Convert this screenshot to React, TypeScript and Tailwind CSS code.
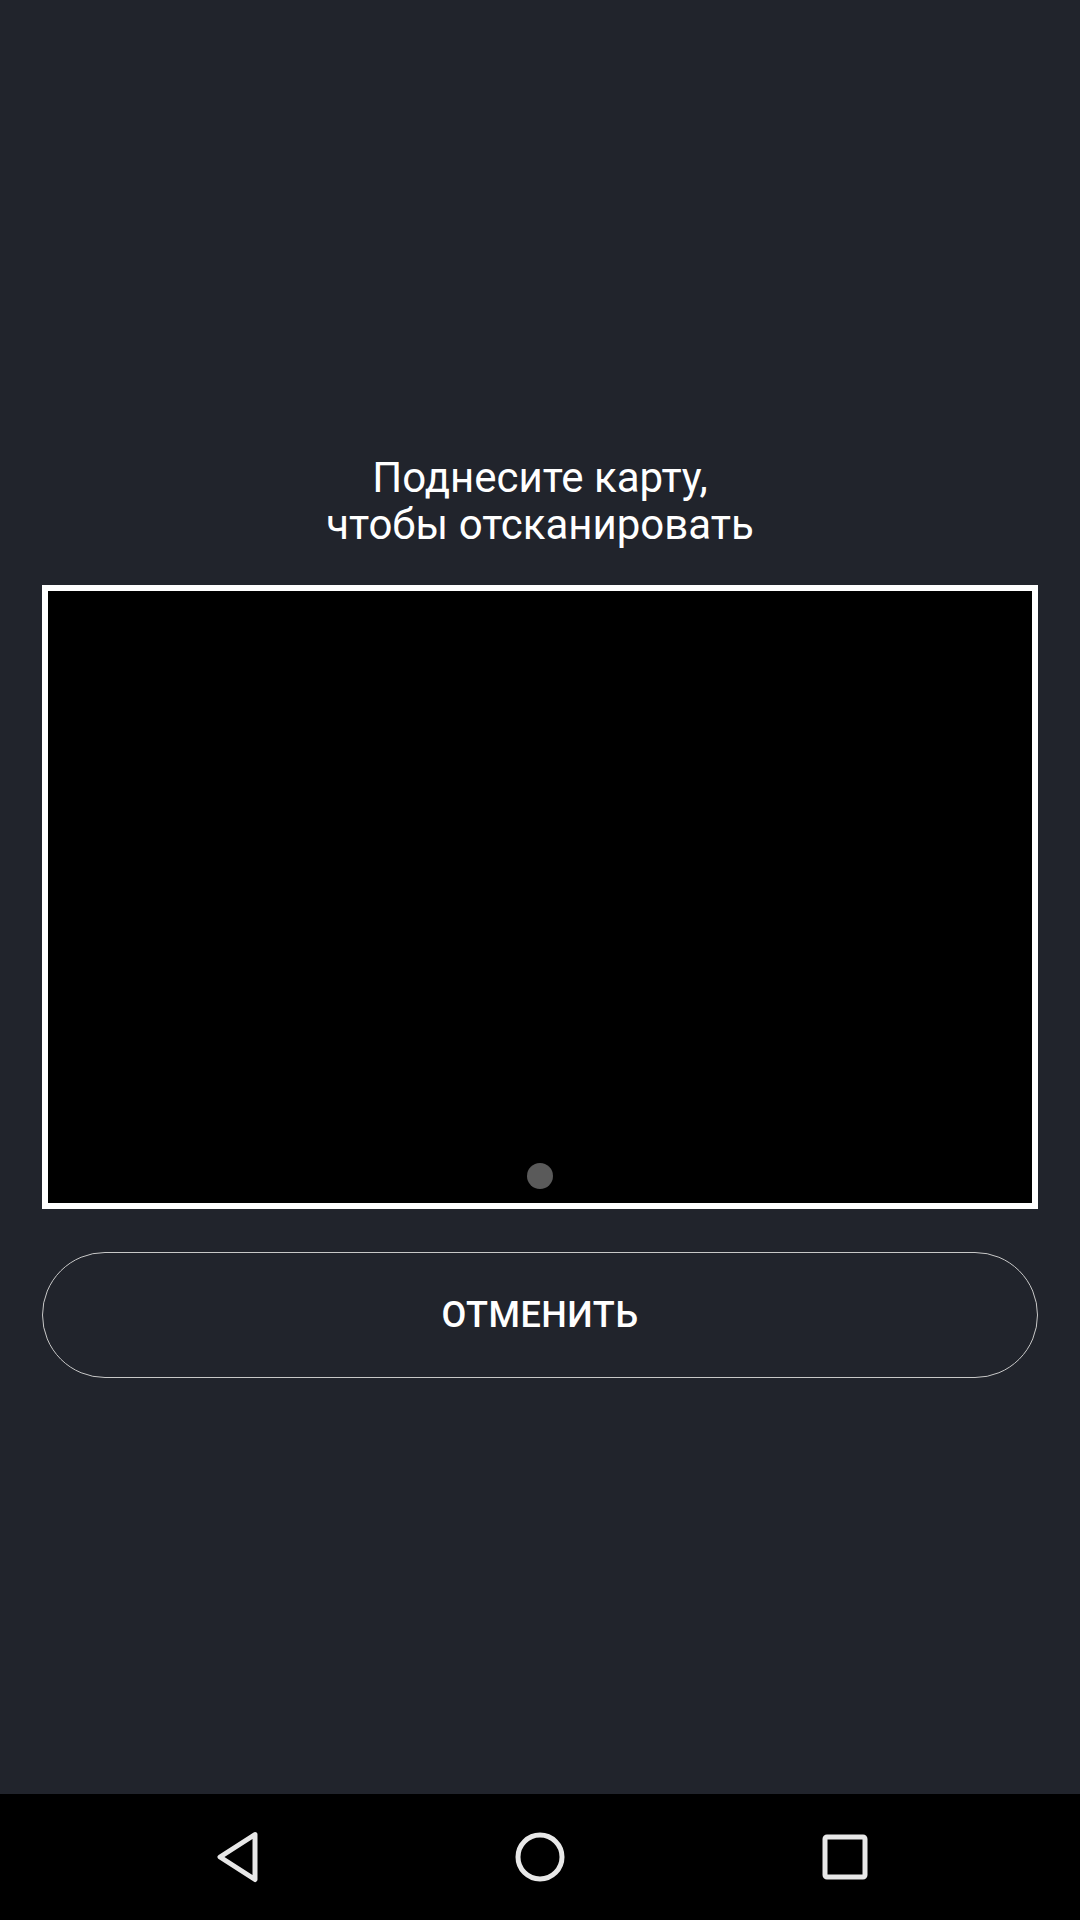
export default function App() {
  return (
    <div
      className="flex h-[1920px] w-[1080px] flex-col bg-[#21242c] text-white"
      style={{ fontFamily: "Roboto, 'Noto Sans', sans-serif" }}
    >
      <main className="flex flex-1 flex-col items-center px-[42px] pt-[454px]">
        <h1 className="text-center text-[42px] font-normal leading-[47px] text-white">
          Поднесите карту,
          <br />
          чтобы отсканировать
        </h1>

        <div className="relative mt-[37px] h-[624px] w-full border-[6px] border-white bg-black">
          {/* camera focus dot */}
          <span className="absolute bottom-[14px] left-1/2 h-[26px] w-[26px] -translate-x-1/2 rounded-full bg-[#5a5a5a]" />
        </div>

        <button
          type="button"
          className="mt-[43px] flex h-[126px] w-full items-center justify-center rounded-full border border-[#c8c8c8] text-[36px] font-medium tracking-[0.5px] text-white"
        >
          ОТМЕНИТЬ
        </button>
      </main>

      <nav className="flex h-[126px] items-center bg-black pl-[178px]">
        <div className="flex w-[120px] justify-center">
          <svg viewBox="0 0 44 52" className="h-[52px] w-[44px]" fill="none" stroke="#e8e8e8" strokeWidth="5" strokeLinejoin="round">
            <path d="M39 3.5 L4 26 L39 48.5 Z" />
          </svg>
        </div>
        <div className="ml-[182px] flex w-[120px] justify-center">
          <svg viewBox="0 0 54 54" className="h-[54px] w-[54px]" fill="none" stroke="#e8e8e8" strokeWidth="5">
            <circle cx="27" cy="27" r="22" />
          </svg>
        </div>
        <div className="ml-[185px] flex w-[120px] justify-center">
          <svg viewBox="0 0 50 50" className="h-[50px] w-[50px]" fill="none" stroke="#e8e8e8" strokeWidth="5">
            <rect x="5" y="5" width="40" height="40" rx="2" />
          </svg>
        </div>
      </nav>
    </div>
  );
}
